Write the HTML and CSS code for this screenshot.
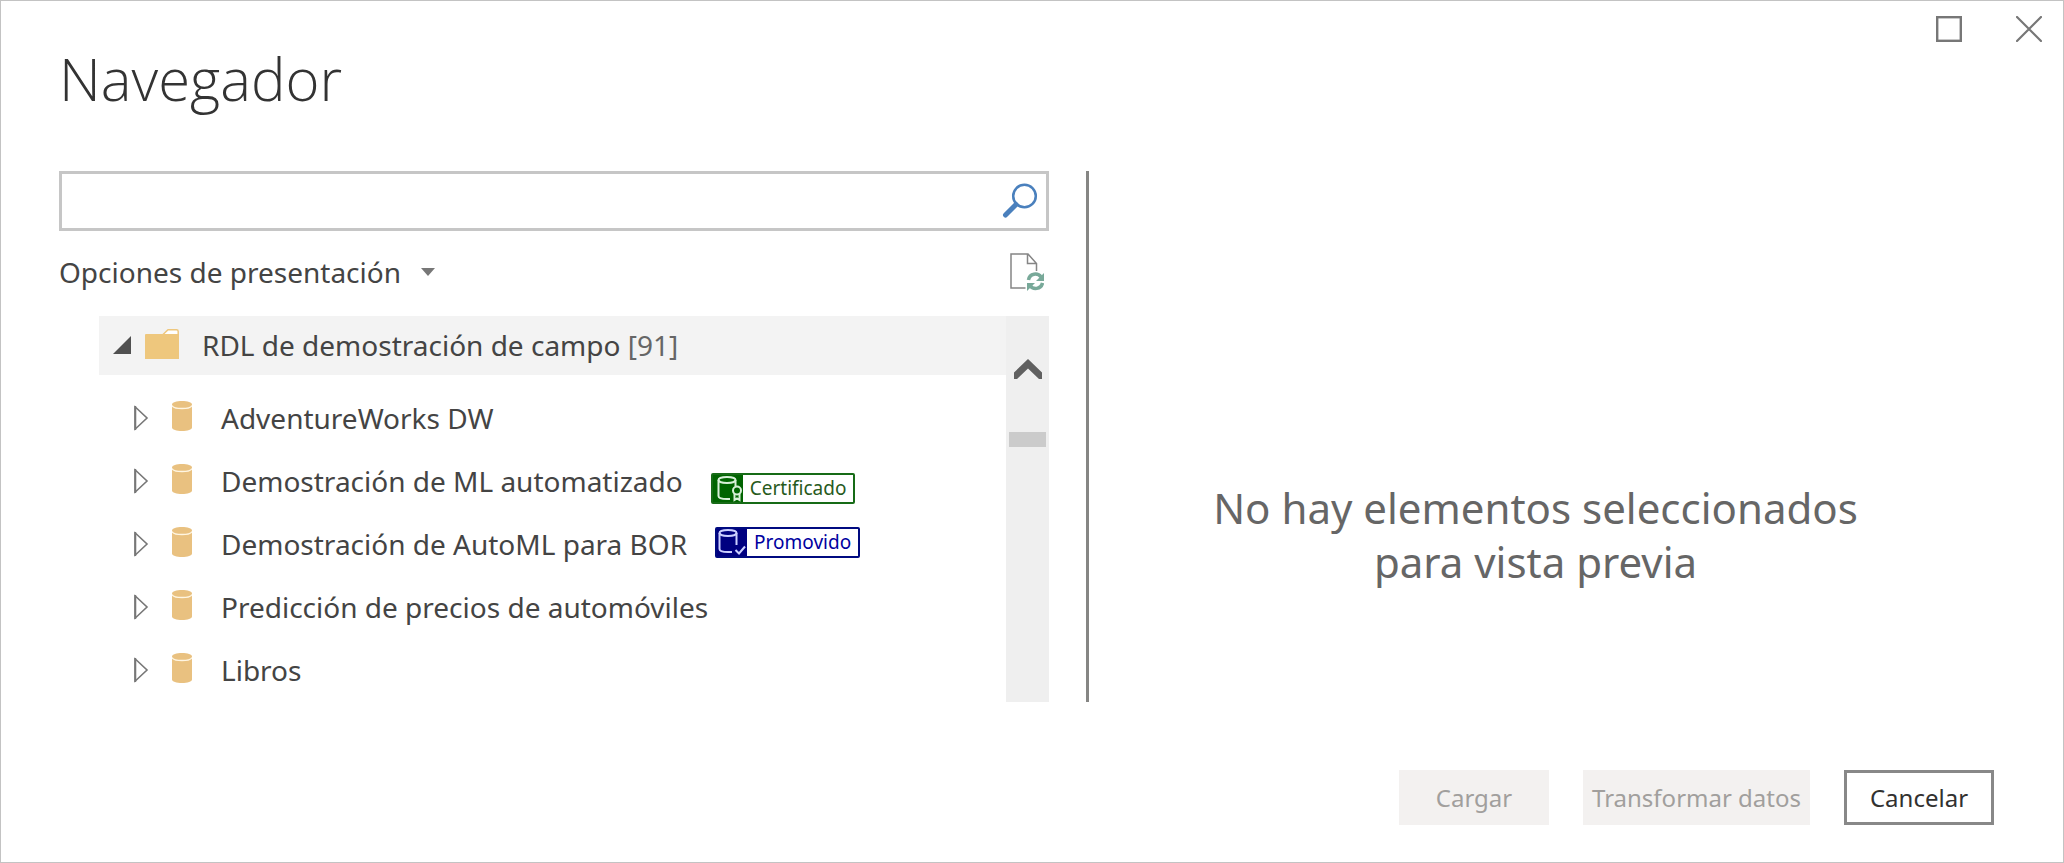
FILE: index.html
```html
<!DOCTYPE html>
<html lang="es">
<head>
<meta charset="utf-8">
<title>Navegador</title>
<link rel="stylesheet" href="styles.css">
</head>
<body>
<svg class="sprite" aria-hidden="true">
  <symbol id="expand" viewBox="0 0 15 26"><path d="M1.3 2v22L13 13z" fill="#fff" stroke="#777" stroke-width="1.6"/><path d="M1.2 1v24" stroke="#777" stroke-width="2"/></symbol>
  <symbol id="database" viewBox="0 0 20 30"><path d="M0 3.5v23C0 28.500 4.500 30 10 30s10-1.500 10-3.500v-23C20 1.500 15.500 0 10 0S0 1.500 0 3.500z" fill="#e9c180"/><path d="M0 4.500c1 2 5 3 10 3s9-1 10-3" fill="none" stroke="#fff6e2" stroke-width="1.300"/></symbol>
</svg>
<main class="dialog">
  <header class="header">
    <h1 class="title">Navegador</h1>
    <div class="window-buttons">
      <button class="icon-button" aria-label="Maximizar"><svg width="26" height="26" viewBox="0 0 26 26"><rect x="1.200" y="1.200" width="23.600" height="23.600" fill="none" stroke="#777" stroke-width="2.400"/></svg></button>
      <button class="icon-button" aria-label="Cerrar"><svg width="26" height="26" viewBox="0 0 26 26"><path d="M1 1l24 24M25 1L1 25" stroke="#777" stroke-width="2.200" stroke-linecap="round"/></svg></button>
    </div>
  </header>
  <div class="content">
    <section class="browser">
      <form class="search">
        <input class="search-input" type="search" aria-label="Buscar">
        <button class="icon-button" type="button" aria-label="Buscar"><svg width="36" height="36" viewBox="0 0 36 36"><circle cx="22.500" cy="13" r="11.300" fill="none" stroke="#4a80bd" stroke-width="2.500"/><path d="M14 21.500L3.500 32" stroke="#4a80bd" stroke-width="5" stroke-linecap="round"/></svg></button>
      </form>
      <div class="toolbar">
        <button class="options">Opciones de presentación <svg width="14" height="8" viewBox="0 0 14 8"><path d="M0 0h14L7 8z" fill="#777"/></svg></button>
        <button class="icon-button" aria-label="Actualizar"><svg width="34" height="38" viewBox="0 0 34 38"><path d="M15.500 35H1V1h17l8.500 9.500V18M17.500 1v9.500h9" fill="none" stroke="#858585" stroke-width="1.500"/><g fill="none" stroke="#78a999" stroke-width="3.500"><path d="M18.500 27c1-7 9.500-7.500 12.500-3"/><path d="M32.500 30c-1.500 6.500-9.500 7-12.500 2.500"/></g><path d="M34 20v8h-8zM17 38v-8h8z" fill="#78a999"/></svg></button>
      </div>
      <div class="tree-view">
        <div class="tree">
          <div class="folder">
            <button class="icon-button" aria-label="Contraer" aria-expanded="true"><svg width="18" height="18" viewBox="0 0 18 18"><path d="M18 0v18H0z" fill="#505050"/></svg></button>
            <svg class="folder-icon" width="34" height="30" viewBox="0 0 34 30"><path d="M18 5.500L23 .800h8.500q1.700 0 1.700 1.700V7H18z" fill="#fff" stroke="#eec77d" stroke-width="1.500"/><path d="M1 5h17l2 0h14v25H0V6q0-1 1-1z" fill="#eec77d"/></svg>
            <span>RDL de demostración de campo <span class="count">[91]</span></span>
          </div>
          <ul class="items">
            <li class="item"><button class="icon-button" aria-label="Expandir AdventureWorks DW"><svg width="15" height="26"><use href="#expand"/></svg></button><svg class="database" width="20" height="30"><use href="#database"/></svg><span>AdventureWorks DW</span></li>
            <li class="item"><button class="icon-button" aria-label="Expandir Demostración de ML automatizado"><svg width="15" height="26"><use href="#expand"/></svg></button><svg class="database" width="20" height="30"><use href="#database"/></svg><span>Demostración de ML automatizado</span>
              <span class="badge certified"><svg width="30" height="27" viewBox="0 0 30 27"><g fill="none" stroke="#d8f0d8" stroke-width="2"><ellipse cx="14" cy="5" rx="8.500" ry="3"/><path d="M5.500 5v16q0 3 8.500 3h3M22.500 5v6"/><circle cx="24" cy="15.500" r="4"/><path d="M21.500 19v6l2.500-1.500 2.500 1.500v-6"/></g></svg><span class="badge-label">Certificado</span></span></li>
            <li class="item"><button class="icon-button" aria-label="Expandir Demostración de AutoML para BOR"><svg width="15" height="26"><use href="#expand"/></svg></button><svg class="database" width="20" height="30"><use href="#database"/></svg><span>Demostración de AutoML para BOR</span>
              <span class="badge promoted"><svg width="30" height="27" viewBox="0 0 30 27"><g fill="none" stroke="#ccd0ff" stroke-width="2"><ellipse cx="11" cy="4" rx="8.500" ry="3"/><path d="M2.500 4v16q0 3 8.500 3h4M19.500 4v12M18.500 21l3.500 3.500 6-7"/></g></svg><span class="badge-label">Promovido</span></span></li>
            <li class="item"><button class="icon-button" aria-label="Expandir Predicción de precios de automóviles"><svg width="15" height="26"><use href="#expand"/></svg></button><svg class="database" width="20" height="30"><use href="#database"/></svg><span>Predicción de precios de automóviles</span></li>
            <li class="item"><button class="icon-button" aria-label="Expandir Libros"><svg width="15" height="26"><use href="#expand"/></svg></button><svg class="database" width="20" height="30"><use href="#database"/></svg><span>Libros</span></li>
          </ul>
        </div>
        <div class="scrollbar">
          <button class="icon-button" aria-label="Desplazar hacia arriba"><svg width="28" height="20" viewBox="0 0 28 20"><path d="M14 0l14 13.500V20h-3L14 9.500 3 20H0v-6.500z" fill="#606060"/></svg></button>
          <div class="thumb"></div>
        </div>
      </div>
    </section>
    <section class="preview"><p class="message">No hay elementos seleccionados<br>para vista previa</p></section>
  </div>
  <footer class="actions">
    <button class="action" disabled>Cargar</button>
    <button class="action" disabled>Transformar datos</button>
    <button class="action cancel">Cancelar</button>
  </footer>
</main>
</body>
</html>
```
FILE: styles.css
```css
* { box-sizing: border-box; }
body {
  margin: 0;
  background: #fff;
  color: #444;
  font: 28px/40px "Noto Sans", "Open Sans", sans-serif;
}
button { font: inherit; color: inherit; cursor: pointer; }
button:disabled { cursor: default; }
svg { display: block; flex: none; }
.sprite { position: absolute; width: 0; height: 0; }
.dialog {
  display: flex;
  flex-direction: column;
  min-height: 100vh;
  padding: 0 69px 37px 58px;
  border: 1px solid #c3c3c3;
}
.header { display: flex; justify-content: space-between; padding-bottom: 52px; }
.title {
  margin: 38px 0 0;
  color: #333;
  font-family: "Open Sans", "Noto Sans", sans-serif;
  font-size: 58px;
  font-weight: 300;
  line-height: 80px;
}
.window-buttons { display: flex; align-items: flex-start; gap: 54px; margin: 15px -48px 0 0; }
.icon-button { display: block; flex: none; padding: 0; border: 0; background: none; }
.content {
  display: grid;
  grid-template-columns: minmax(0, 990fr) minmax(0, 908fr);
  column-gap: 37px;
}
.search { display: flex; align-items: center; height: 60px; padding-right: 8px; border: 3px solid #c6c6c6; }
.search-input { flex: 1; align-self: stretch; min-width: 0; padding: 0 12px; border: 0; outline: 0; background: none; font: inherit; }
.toolbar { display: flex; align-items: center; justify-content: space-between; height: 85px; padding: 0 5px 4px 0; }
.options { display: flex; align-items: center; gap: 20px; padding: 0; border: 0; background: none; }
.tree-view { display: flex; padding-left: 40px; }
.tree { flex: 1; min-width: 0; }
.folder { display: flex; align-items: center; height: 59px; padding: 0 0 2px 14px; background: #f3f3f3; }
.folder-icon { margin: 0 23px 2px 14px; }
.count { color: #666; }
.items { margin: 12px 0 0; padding: 0; list-style: none; }
.item { display: flex; align-items: center; height: 63px; padding: 0 0 1px 35px; }
.database { margin: 0 29px 5px 23px; }
.badge {
  display: flex;
  align-items: center;
  margin-left: 28px;
  border: 2px solid;
  border-radius: 2px;
  font-size: 19px;
  line-height: 27px;
}
.badge svg { background: #006400; }
.badge-label { padding: 0 7px; background: #fff; }
.certified { margin-top: 14px; border-color: #176b17; color: #275a1c; }
.promoted { margin-bottom: 4px; border-color: #000a80; color: #0000a0; }
.promoted svg { background: #000080; }
.scrollbar { display: flex; flex-direction: column; align-items: center; gap: 53px; width: 43px; padding-top: 43px; background: #efefef; }
.thumb { width: 37px; height: 15px; background: #cbcbcb; }
.preview { display: flex; align-items: center; justify-content: center; padding: 196px 12px 0 0; border-left: 3px solid #868684; }
.message { margin: 0; color: #666; font-size: 42px; line-height: 54px; text-align: center; }
.actions { display: flex; justify-content: flex-end; gap: 34px; margin-top: auto; padding-top: 40px; }
.action { min-width: 150px; height: 55px; padding: 0 9px; border: 0; background: #f3f1f0; color: #a19f9d; font-size: 24px; line-height: 32px; }
.cancel { border: 3px solid #888; background: #fff; color: #323130; }
```
